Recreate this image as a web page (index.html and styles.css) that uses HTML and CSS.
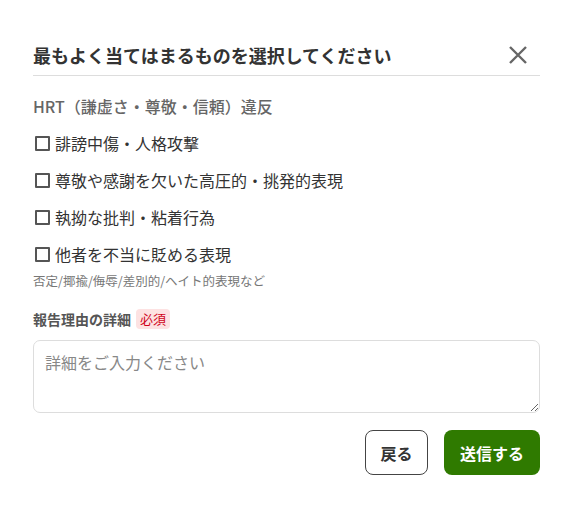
FILE: index.html
```html
<!DOCTYPE html>
<html lang="ja">
<head>
<meta charset="utf-8">
<link rel="stylesheet" href="styles.css">
</head>
<body>
<div class="dialog">
  <div class="header">
    <h1 class="title">最もよく当てはまるものを選択してください</h1>
    <button class="close" aria-label="閉じる">
      <svg width="20" height="20" viewBox="0 0 20 20"><path d="M2 2 L18 18 M18 2 L2 18" stroke="#666" stroke-width="2.4" fill="none"/></svg>
    </button>
  </div>
  <h2 class="section">HRT（謙虚さ・尊敬・信頼）違反</h2>
  <ul class="options">
    <li class="option"><span class="box"></span>誹謗中傷・人格攻撃</li>
    <li class="option"><span class="box"></span>尊敬や感謝を欠いた高圧的・挑発的表現</li>
    <li class="option"><span class="box"></span>執拗な批判・粘着行為</li>
    <li class="option"><span class="box"></span>他者を不当に貶める表現</li>
  </ul>
  <p class="note">否定/揶揄/侮辱/差別的/ヘイト的表現など</p>
  <div class="label-row">
    <span class="label">報告理由の詳細</span><span class="badge">必須</span>
  </div>
  <textarea class="detail" placeholder="詳細をご入力ください"></textarea>
  <div class="actions">
    <button class="btn back">戻る</button>
    <button class="btn submit">送信する</button>
  </div>
</div>
</body>
</html>
```
FILE: styles.css
```css
* { box-sizing: border-box; }
html, body { margin: 0; padding: 0; background: #fff; }
body {
  font-family: "Noto Sans CJK JP", "Noto Sans", sans-serif;
  color: #333;
}
.dialog {
  padding: 34px 32px 0 33px;
}
.header {
  display: flex;
  align-items: center;
  justify-content: space-between;
  height: 42px;
  border-bottom: 1px solid #ddd;
}
.title {
  margin: 0;
  font-size: 18px;
  font-weight: 700;
  color: #333;
  line-height: 38px;
}
.close {
  border: 0;
  background: none;
  padding: 0;
  margin-right: 12px;
  width: 20px;
  height: 20px;
  display: flex;
}
.section {
  margin: 18px 0 0;
  font-size: 16px;
  font-weight: 500;
  color: #666;
  line-height: 24px;
}
.options {
  list-style: none;
  margin: 13px 0 0;
  padding: 0;
  display: flex;
  flex-direction: column;
  gap: 13px;
}
.option {
  display: flex;
  align-items: center;
  font-size: 16px;
  line-height: 24px;
  color: #333;
}
.box {
  width: 15px;
  height: 15px;
  border: 2px solid #555;
  border-radius: 1px;
  margin: 0 5px 0 2px;
  flex: none;
}
.note {
  margin: 6px 0 0;
  font-size: 12.5px;
  color: #777;
  line-height: 18px;
}
.label-row {
  display: flex;
  align-items: center;
  gap: 5px;
  margin-top: 19px;
}
.label {
  font-size: 14px;
  font-weight: 700;
  color: #555;
}
.badge {
  font-size: 13px;
  color: #d0021b;
  background: #fde2e2;
  border-radius: 4px;
  padding: 0 4px;
  line-height: 20px;
}
.detail {
  display: block;
  width: 100%;
  height: 73px;
  margin-top: 11px;
  border: 1px solid #ddd;
  border-radius: 7px;
  padding: 9px 11px;
  font-family: inherit;
  font-size: 16px;
  color: #333;
  resize: vertical;
}
.detail::placeholder { color: #888; }
.actions {
  display: flex;
  justify-content: flex-end;
  gap: 16px;
  margin-top: 17px;
}
.btn {
  height: 45px;
  border-radius: 8px;
  font-family: inherit;
  font-size: 16px;
  font-weight: 700;
  padding: 0;
}
.back {
  width: 63px;
  background: #fff;
  border: 1px solid #444;
  color: #333;
}
.submit {
  width: 96px;
  background: #2f7a00;
  border: 0;
  color: #fff;
}
```
